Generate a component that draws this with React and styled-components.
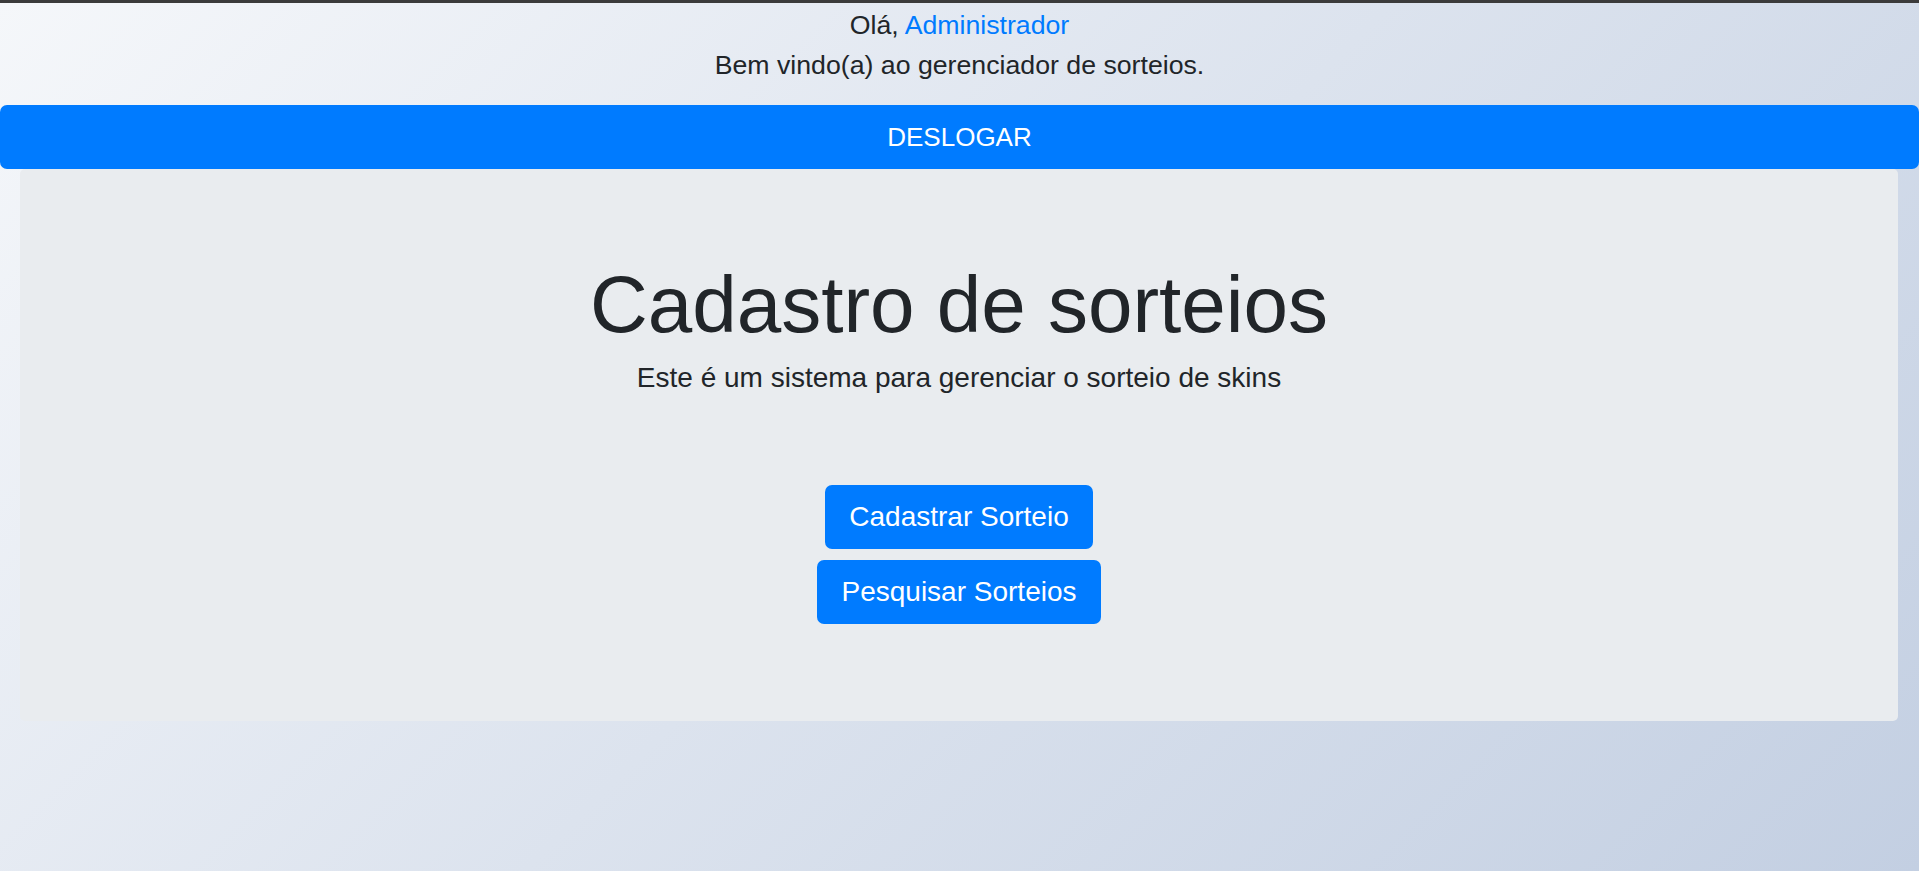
import styled, { createGlobalStyle } from 'styled-components';

const GlobalStyle = createGlobalStyle`
    html, body {
        margin: 0;
        padding: 0;
    }
    body {
        min-height: 100vh;
        font-family: "Comic Sans MS", "Liberation Sans", Arial, sans-serif;
        color: #212529;
        background: linear-gradient(135deg, #f5f7fa 0%, #c3cfe2 100%);
        background-attachment: fixed;
    }
`;

const StyledPage = styled.div`
    min-height: 100vh;
    box-sizing: border-box;
    border-top: 3px solid #3b3b3b;
`;

const StyledGreeting = styled.header`
    padding-top: 2px;
    text-align: center;
    font-size: 26.7px;
    line-height: 40px;
`;

const StyledUserName = styled.span`
    color: #007bff;
`;

const StyledLogoutButton = styled.button`
    display: block;
    width: 100%;
    height: 64px;
    margin-top: 20px;
    padding: 0;
    border: none;
    border-radius: 7px;
    background: #007bff;
    color: #fff;
    font-family: inherit;
    font-size: 26px;
    text-transform: uppercase;
    cursor: pointer;
`;

const StyledJumbotron = styled.section`
    display: flex;
    flex-direction: column;
    align-items: center;
    margin: 0 21px 0 20px;
    padding: 88px 32px 97px;
    border-radius: 5px;
    background: #e9ecef;
`;

const StyledTitle = styled.h1`
    margin: 0;
    font-size: 80px;
    font-weight: 400;
    line-height: 1.2;
`;

const StyledLead = styled.p`
    margin: 4px 0 86px;
    font-size: 28px;
    line-height: 1.5;
`;

const StyledActions = styled.div`
    display: flex;
    flex-direction: column;
    align-items: center;
    gap: 11px;
`;

const StyledActionButton = styled.button`
    height: 64px;
    padding: 0 24px;
    border: none;
    border-radius: 7px;
    background: #007bff;
    color: #fff;
    font-family: inherit;
    font-size: 28px;
    cursor: pointer;
`;

const App = () => (
    <StyledPage>
        <GlobalStyle/>
        <StyledGreeting>
            <div>
                Olá, <StyledUserName>Administrador</StyledUserName>
            </div>
            <div>Bem vindo(a) ao gerenciador de sorteios.</div>
        </StyledGreeting>
        <StyledLogoutButton>Deslogar</StyledLogoutButton>
        <StyledJumbotron>
            <StyledTitle>Cadastro de sorteios</StyledTitle>
            <StyledLead>Este é um sistema para gerenciar o sorteio de skins</StyledLead>
            <StyledActions>
                <StyledActionButton>Cadastrar Sorteio</StyledActionButton>
                <StyledActionButton>Pesquisar Sorteios</StyledActionButton>
            </StyledActions>
        </StyledJumbotron>
    </StyledPage>
);

export default App;
